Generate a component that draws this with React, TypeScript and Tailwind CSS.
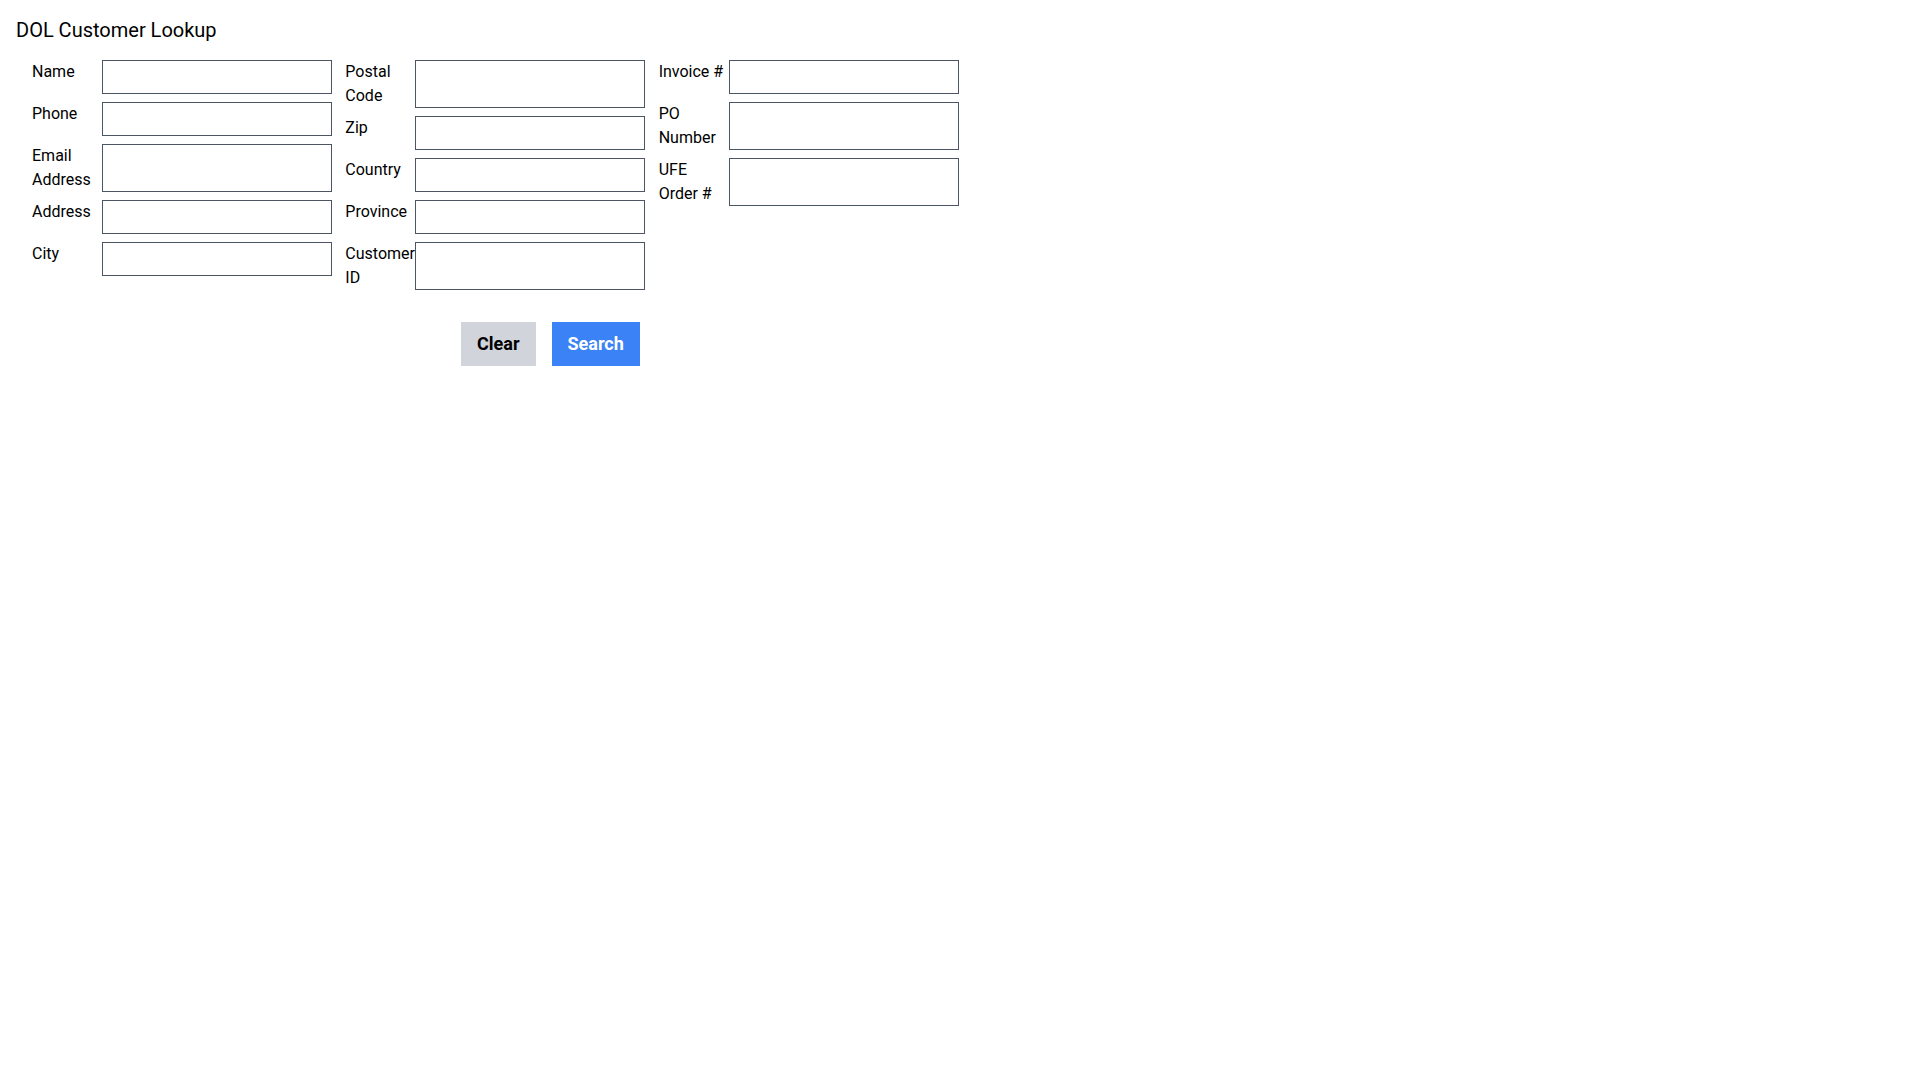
const columns: string[][] = [
  ['Name', 'Phone', 'Email Address', 'Address', 'City'],
  ['Postal Code', 'Zip', 'Country', 'Province', 'Customer ID'],
  ['Invoice #', 'PO Number', 'UFE Order #'],
];

const Field = ({ label }: { label: string }) => (
  <div className="flex items-stretch">
    <label className="w-[70px] shrink-0 text-base leading-6 text-black whitespace-normal">
      {label}
    </label>
    <input
      type="text"
      className="w-[230px] min-h-[34px] border border-[#4b5563] bg-white px-2 text-base outline-none"
    />
  </div>
);

export default function App() {
  return (
    <div className="min-h-screen bg-white p-4 font-['Roboto',sans-serif] text-black">
      <h1 className="text-xl leading-7 font-normal mb-4">DOL Customer Lookup</h1>

      <div className="px-4">
        <div className="grid w-[940px] grid-cols-3 items-start">
          {columns.map((fields, i) => (
            <div key={i} className="flex flex-col gap-2">
              {fields.map((f) => (
                <Field key={f} label={f} />
              ))}
            </div>
          ))}
        </div>

        <div className="mt-8 flex gap-4 pl-[429px]">
          <button className="bg-[#d1d5db] px-4 py-2 text-lg leading-7 font-bold text-black">
            Clear
          </button>
          <button className="bg-[#3b82f6] px-4 py-2 text-lg leading-7 font-bold text-white">
            Search
          </button>
        </div>
      </div>
    </div>
  );
}
